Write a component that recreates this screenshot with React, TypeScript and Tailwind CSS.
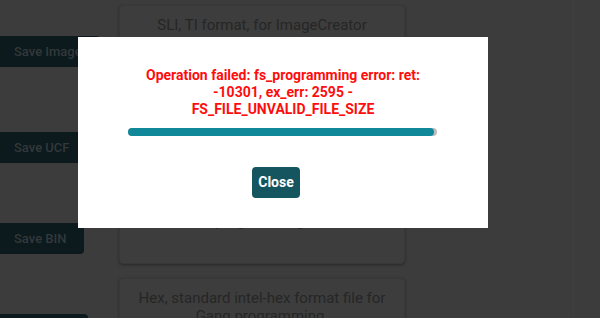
import React from "react";

const font = { fontFamily: "Roboto, 'Liberation Sans', sans-serif" };

const SaveButton = ({ label, className }: { label: string; className: string }) => (
  <button
    className={`ml-[-4px] h-[31px] shrink-0 self-start rounded-[4px] bg-[#0c1a1e] px-[18px] text-[13px] font-medium text-[#33383a] ${className}`}
  >
    {label}
  </button>
);

const Card = ({ lines, className }: { lines: string[]; className: string }) => (
  <div
    className={`w-[286px] shrink-0 rounded-[4px] border border-[#383838] bg-[#3d3d3d] px-[16px] text-center text-[15px] leading-[18px] text-[#262626] shadow-[0_1px_3px_rgba(0,0,0,0.35)] ${className}`}
  >
    {lines.map((l) => (
      <div key={l}>{l}</div>
    ))}
  </div>
);

const App = () => {
  return (
    <div className="relative h-[318px] w-[600px] overflow-hidden bg-[#3c3c3c]" style={font}>
      <div className="flex h-full">
        <div className="flex w-[119px] shrink-0 flex-col">
          <SaveButton label="Save Image" className="mt-[36px]" />
          <SaveButton label="Save UCF" className="mt-[65px]" />
          <SaveButton label="Save BIN" className="mt-[60px]" />
          <SaveButton label="Save HEX" className="mt-[60px]" />
        </div>

        <div className="flex shrink-0 flex-col">
          <Card
            className="mt-[5px] h-[95px] pt-[10px]"
            lines={["SLI, TI format, for ImageCreator", "and MSP-GANG"]}
          />
          <Card
            className="mt-[14px] h-[150px] pt-[25px]"
            lines={[
              "TXT, TI-TXT format file, for",
              "MSP430 Flasher, UniFlash",
              "and other tools used for",
              "in-system device",
              "programming.",
            ]}
          />
          <Card
            className="mt-[14px] h-[103px] pt-[10px]"
            lines={["Hex, standard intel-hex format file for", "Gang programming."]}
          />
        </div>

        <div className="ml-auto h-full w-[27px] border-l border-[#3f3f3f]" />
      </div>

      <div className="absolute inset-0">
        <div className="ml-[78px] mt-[37px] flex h-[191px] w-[410px] flex-col bg-white">
          <p className="px-[50px] pt-[30px] text-center text-[14px] font-bold leading-[17px] text-[#ff0d0d]">
            Operation failed: fs_programming error: ret: -10301, ex_err: 2595 - FS_FILE_UNVALID_FILE_SIZE
          </p>
          <div className="ml-[50px] mt-[10px] h-[8px] w-[309px] rounded-full bg-[#bdbdbd]">
            <div className="h-full w-[99%] rounded-full bg-[#11889a]" />
          </div>
          <button className="ml-[174px] mt-[31px] h-[31px] w-[48px] self-start rounded-[4px] bg-[#14555f] text-[14px] font-bold text-white">
            Close
          </button>
        </div>
      </div>
    </div>
  );
};

export default App;
